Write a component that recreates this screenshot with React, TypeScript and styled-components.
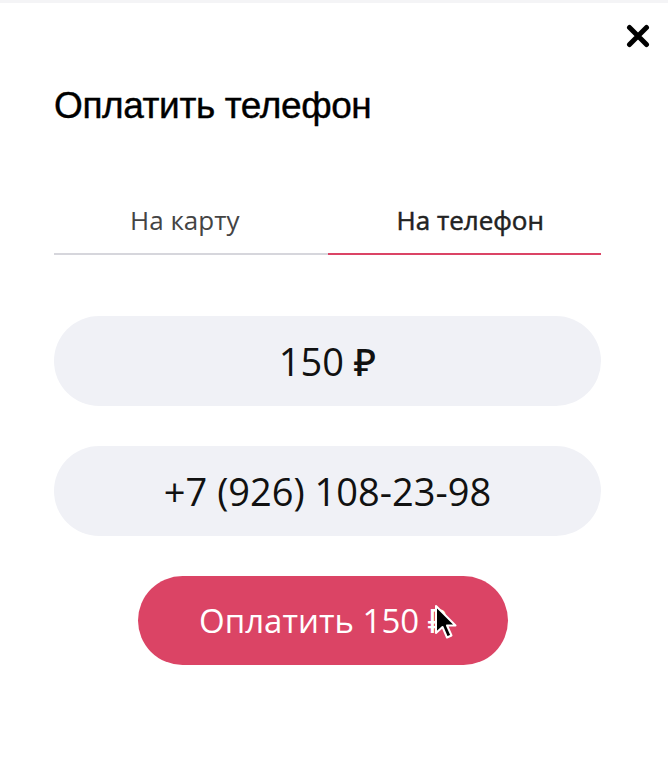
import styled, { createGlobalStyle } from "styled-components";

const GlobalStyle = createGlobalStyle`
  body {
    margin: 0;
    background: #fff;
    font-family: "Open Sans", "Noto Sans", sans-serif;
  }
`;

const tabs = ["На карту", "На телефон"];

const App = (): JSX.Element => {
  const active = 1;

  return (
    <>
      <GlobalStyle />
      <Modal>
        <TopBar>
          <CloseButton aria-label="close">
            <svg width="24" height="24" viewBox="0 0 24 24">
              <path
                d="M3.5 3.5 L20.5 20.5 M20.5 3.5 L3.5 20.5"
                stroke="#000"
                strokeWidth="5"
                strokeLinecap="round"
              />
            </svg>
          </CloseButton>
        </TopBar>
        <Title>Оплатить телефон</Title>
        <Tabs>
          {tabs.map((tab, index) => (
            <Tab key={tab} $active={index === active}>
              {tab}
            </Tab>
          ))}
        </Tabs>
        <Fields>
          <Field>150 ₽</Field>
          <Field>+7 (926) 108-23-98</Field>
        </Fields>
        <PayButton>
          Оплатить 150 ₽
          <Cursor width="26" height="38" viewBox="0 0 26 38">
            <path
              d="M2 2 L2 29 L8.5 23 L13 33.5 L17.5 31.5 L13 21.5 L21.5 21.5 Z"
              fill="#000"
              stroke="#fff"
              strokeWidth="2"
              strokeLinejoin="round"
            />
          </Cursor>
        </PayButton>
      </Modal>
    </>
  );
};

export default App;

const Modal = styled.main`
  min-height: 776px;
  box-sizing: border-box;
  border-top: 3px solid #f4f4f6;
  padding: 0 67px 0 54px;
  display: flex;
  flex-direction: column;
`;

const TopBar = styled.div`
  display: flex;
  justify-content: flex-end;
  padding-top: 21px;
  margin-right: -49px;
`;

const CloseButton = styled.button`
  border: none;
  background: none;
  padding: 0;
  width: 24px;
  height: 24px;
  cursor: pointer;
  display: block;
`;

const Title = styled.h1`
  margin: 38px 0 0 0;
  font-family: "Liberation Sans", Arial, sans-serif;
  font-weight: 400;
  font-size: 37px;
  line-height: 40px;
  color: #000;
  letter-spacing: -0.4px;
  -webkit-text-stroke: 0.4px #000;
`;

const Tabs = styled.div`
  display: grid;
  grid-template-columns: 1fr 1fr;
  margin-top: 77px;
`;

const Tab = styled.div<{ $active: boolean }>`
  text-align: center;
  font-size: 26px;
  line-height: 34px;
  padding: 0 12px 16px 0;
  color: ${(props) => (props.$active ? "#222" : "#444")};
  font-weight: ${(props) => (props.$active ? 500 : 400)};
  -webkit-text-stroke: ${(props) => (props.$active ? "0.5px #222" : "0")};
  border-bottom: 2px solid
    ${(props) => (props.$active ? "#db4465" : "#d6d6dc")};

  & + & {
    padding: 0 0 16px 12px;
  }
`;

const Fields = styled.div`
  display: flex;
  flex-direction: column;
  gap: 40px;
  margin-top: 61px;
`;

const Field = styled.div`
  height: 90px;
  border-radius: 45px;
  background: #f0f1f6;
  display: flex;
  align-items: center;
  justify-content: center;
  font-size: 38px;
  font-weight: 500;
  color: #111;
`;

const PayButton = styled.button`
  position: relative;
  align-self: center;
  margin: 40px 9px 0 0;
  width: 370px;
  height: 89px;
  border: none;
  border-radius: 45px;
  background: #db4465;
  color: #fff;
  font-family: "Open Sans", "Noto Sans", sans-serif;
  font-size: 33px;
  cursor: pointer;
`;

const Cursor = styled.svg`
  position: absolute;
  left: 296px;
  top: 28px;
`;
